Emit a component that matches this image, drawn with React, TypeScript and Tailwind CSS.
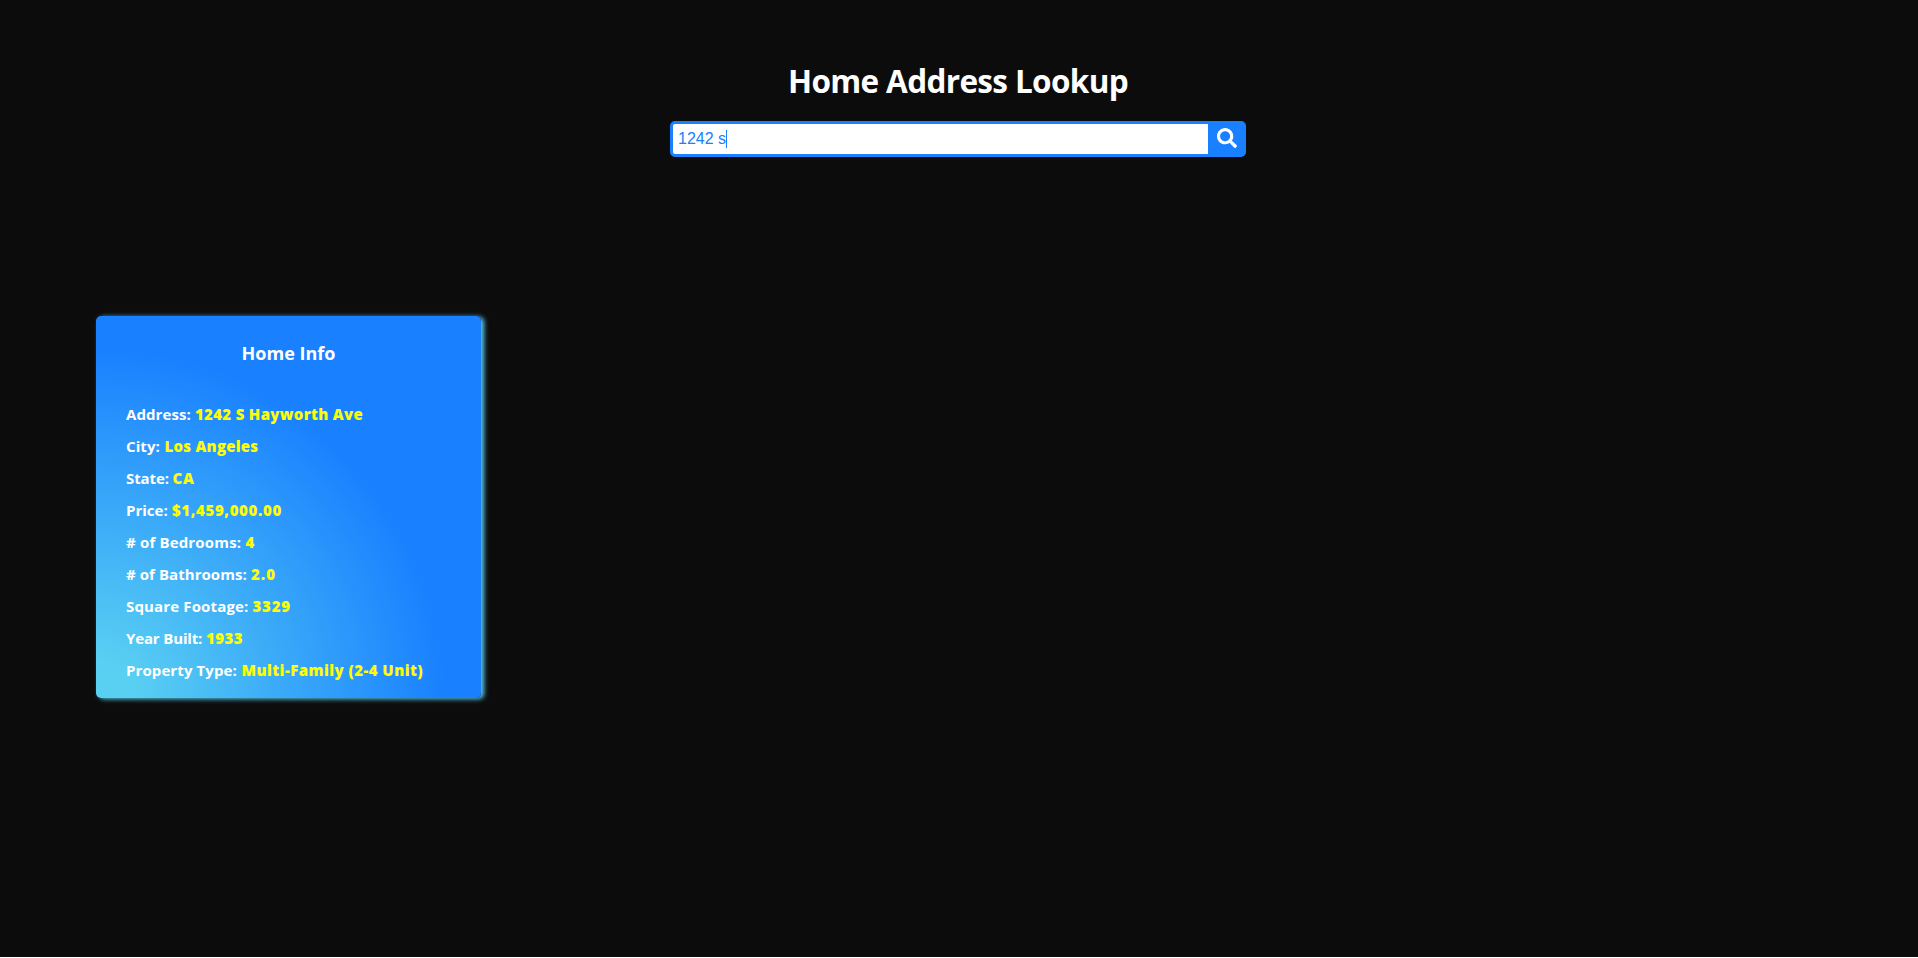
import { FaSearch } from "react-icons/fa";

type Row = { label: string; value: string; labelClass: string; valueClass: string };

const rows: Row[] = [
  { label: "Address:", value: "1242 S Hayworth Ave", labelClass: "w-[69px] tracking-[0.08px]", valueClass: "tracking-[0.32px]" },
  { label: "City:", value: "Los Angeles", labelClass: "w-[38.5px] tracking-[0.1px]", valueClass: "tracking-[0.25px]" },
  { label: "State:", value: "CA", labelClass: "w-[46.5px] tracking-[-0.1px]", valueClass: "tracking-[0.8px]" },
  { label: "Price:", value: "$1,459,000.00", labelClass: "w-[46px]", valueClass: "tracking-[0.65px]" },
  { label: "# of Bedrooms:", value: "4", labelClass: "w-[119.5px] tracking-[0.17px]", valueClass: "" },
  { label: "# of Bathrooms:", value: "2.0", labelClass: "w-[125px] tracking-[0.06px]", valueClass: "tracking-[1px]" },
  { label: "Square Footage:", value: "3329", labelClass: "w-[126.5px] tracking-[0.15px]", valueClass: "tracking-[0.8px]" },
  { label: "Year Built:", value: "1933", labelClass: "w-[80px] tracking-[-0.15px]", valueClass: "tracking-[0.5px]" },
  { label: "Property Type:", value: "Multi-Family (2-4 Unit)", labelClass: "w-[115.5px] tracking-[0.1px]", valueClass: "tracking-[0.45px]" },
];

export default function App() {
  return (
    <div className="h-[958px] bg-white font-['Open_Sans','Noto_Sans',sans-serif] text-white">
      <div className="flex h-[957px] flex-col bg-[#0c0c0c]">
        <header className="flex flex-col items-center pt-[57px] pr-[2px]">
          <h1 className="h-[64px] whitespace-nowrap text-[31.5px] leading-[47px] font-bold tracking-[-0.65px]">Home Address Lookup</h1>
          <div className="flex h-9 w-[576px] overflow-hidden rounded-[5px] border-[3px] border-[#1980ff] bg-[#1980ff]">
            <div className="flex w-[535px] items-center bg-white pl-[5px] font-['Liberation_Sans',sans-serif] text-base text-[#1980ff]">
              <span>1242 s</span>
              <span className="h-[18px] w-px bg-[#1980ff]" />
            </div>
            <button className="flex flex-1 items-center justify-center pb-[2px] pl-[3px] text-xl text-white">
              <FaSearch />
            </button>
          </div>
        </header>
        <section className="mt-[159px] ml-24 h-[382px] w-[385px] rounded-[5px] bg-[radial-gradient(circle_at_0%_100%,#59cff2_38px,#1980ff_350px)] px-[30px] pt-[25px] shadow-[3px_1px_5px_#59cff2]">
          <h2 className="mb-[33px] text-center text-lg leading-6 font-bold">Home Info</h2>
          {rows.map((row) => (
            <p key={row.label} className="flex h-8 items-center text-[15px] leading-8 font-bold whitespace-nowrap">
              <span className={row.labelClass}>{row.label}</span>
              <span className={"font-extrabold text-[#ffff00] " + row.valueClass}>{row.value}</span>
            </p>
          ))}
        </section>
      </div>
    </div>
  );
}
